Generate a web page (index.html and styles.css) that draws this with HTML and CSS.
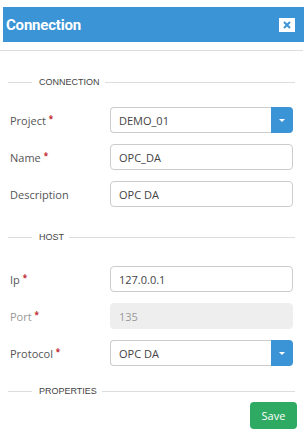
FILE: index.html
```html
<!DOCTYPE html>
<html lang="en">
<head>
    <meta charset="UTF-8">
    <meta name="viewport" content="width=device-width, initial-scale=1.0">
    <title>Connection</title>
    <link rel="stylesheet" href="styles.css">
</head>
<body>
    <div class="dialog">
        <div class="dialog-header">
            <h1>Connection</h1>
            <button class="close-btn" type="button">
                <svg width="8" height="8" viewBox="0 0 8 8"><path d="M1 1L7 7M7 1L1 7" stroke="#3a94d6" stroke-width="2"/></svg>
            </button>
        </div>
        <div class="dialog-body">
            <div class="section-title"><span>Connection</span></div>
            <div class="row">
                <label>Project <i>*</i></label>
                <div class="select">
                    <div class="field">DEMO_01</div>
                    <div class="select-btn"><span class="caret"></span></div>
                </div>
            </div>
            <div class="row">
                <label>Name <i>*</i></label>
                <div class="field">OPC_DA</div>
            </div>
            <div class="row">
                <label>Description</label>
                <div class="field">OPC DA</div>
            </div>

            <div class="section-title host"><span>Host</span></div>
            <div class="row">
                <label>Ip <i>*</i></label>
                <div class="field">127.0.0.1</div>
            </div>
            <div class="row disabled">
                <label>Port <i>*</i></label>
                <div class="field">135</div>
            </div>
            <div class="row">
                <label>Protocol <i>*</i></label>
                <div class="select">
                    <div class="field">OPC DA</div>
                    <div class="select-btn"><span class="caret"></span></div>
                </div>
            </div>

            <div class="section-title props"><span>Properties</span></div>
            <div class="actions">
                <button class="save-btn" type="button">Save</button>
            </div>
        </div>
    </div>
</body>
</html>
```
FILE: styles.css
```css
* {
    margin: 0;
    padding: 0;
    box-sizing: border-box;
}

body {
    background: #fff;
    font-family: 'Open Sans', sans-serif;
}

.dialog {
    width: 307px;
    padding-top: 7px;
}

.dialog-header {
    margin: 0 3px;
    height: 35px;
    background: #3a94d6;
    display: flex;
    align-items: center;
    justify-content: space-between;
    padding: 0 9px 0 3px;
}

.dialog-header h1 {
    font-family: Roboto, sans-serif;
    font-size: 15px;
    font-weight: 700;
    color: #fff;
    letter-spacing: -0.2px;
}

.close-btn {
    width: 16px;
    height: 14px;
    background: #fff;
    border: none;
    display: flex;
    align-items: center;
    justify-content: center;
}

.dialog-body {
    margin-top: 8px;
    border-top: 1px solid #ddd;
    margin-right: 4px;
    padding: 26px 10px 0 10px;
}

.section-title {
    display: flex;
    align-items: center;
    font-family: 'Liberation Sans', Arial, sans-serif;
    font-size: 9px;
    color: #444;
    text-transform: uppercase;
    margin: 0 -2px 20px -2px;
}

.section-title::before {
    content: "";
    width: 24px;
    border-top: 1px solid #ddd;
    margin-right: 7px;
}

.section-title::after {
    content: "";
    flex: 1;
    border-top: 1px solid #ddd;
    margin-left: 5px;
}

.section-title.host {
    margin-top: 25px;
    margin-bottom: 24px;
}

.section-title.props {
    margin-top: 20px;
    margin-bottom: 6px;
}

.row {
    display: flex;
    align-items: center;
    margin-bottom: 11px;
}

.row label {
    width: 100px;
    font-size: 11px;
    color: #555;
}

.row label i {
    font-style: normal;
    color: #c0282d;
    font-size: 8px;
    font-weight: 700;
    vertical-align: 3px;
}

.field {
    flex: 1;
    height: 26px;
    border: 1px solid #ccc;
    border-radius: 4px;
    font-size: 11px;
    color: #444;
    padding: 0 8px;
    display: flex;
    align-items: center;
}

.disabled label {
    color: #999;
}

.disabled .field {
    background: #eee;
    border-color: #eee;
    color: #999;
}

.select {
    flex: 1;
    display: flex;
}

.select .field {
    border-radius: 4px 0 0 4px;
    border-right: none;
}

.select-btn {
    width: 22px;
    height: 26px;
    background: #3a94d6;
    border-radius: 0 4px 4px 0;
    display: flex;
    align-items: center;
    justify-content: center;
}

.caret {
    width: 0;
    height: 0;
    border-left: 3px solid transparent;
    border-right: 3px solid transparent;
    border-top: 3px solid #fff;
}

.actions {
    display: flex;
    justify-content: flex-end;
    margin-right: -4px;
}

.save-btn {
    width: 47px;
    height: 27px;
    background: #2eaa62;
    border: none;
    border-radius: 4px;
    color: #fff;
    font-family: 'Open Sans', sans-serif;
    font-size: 11px;
}
```
